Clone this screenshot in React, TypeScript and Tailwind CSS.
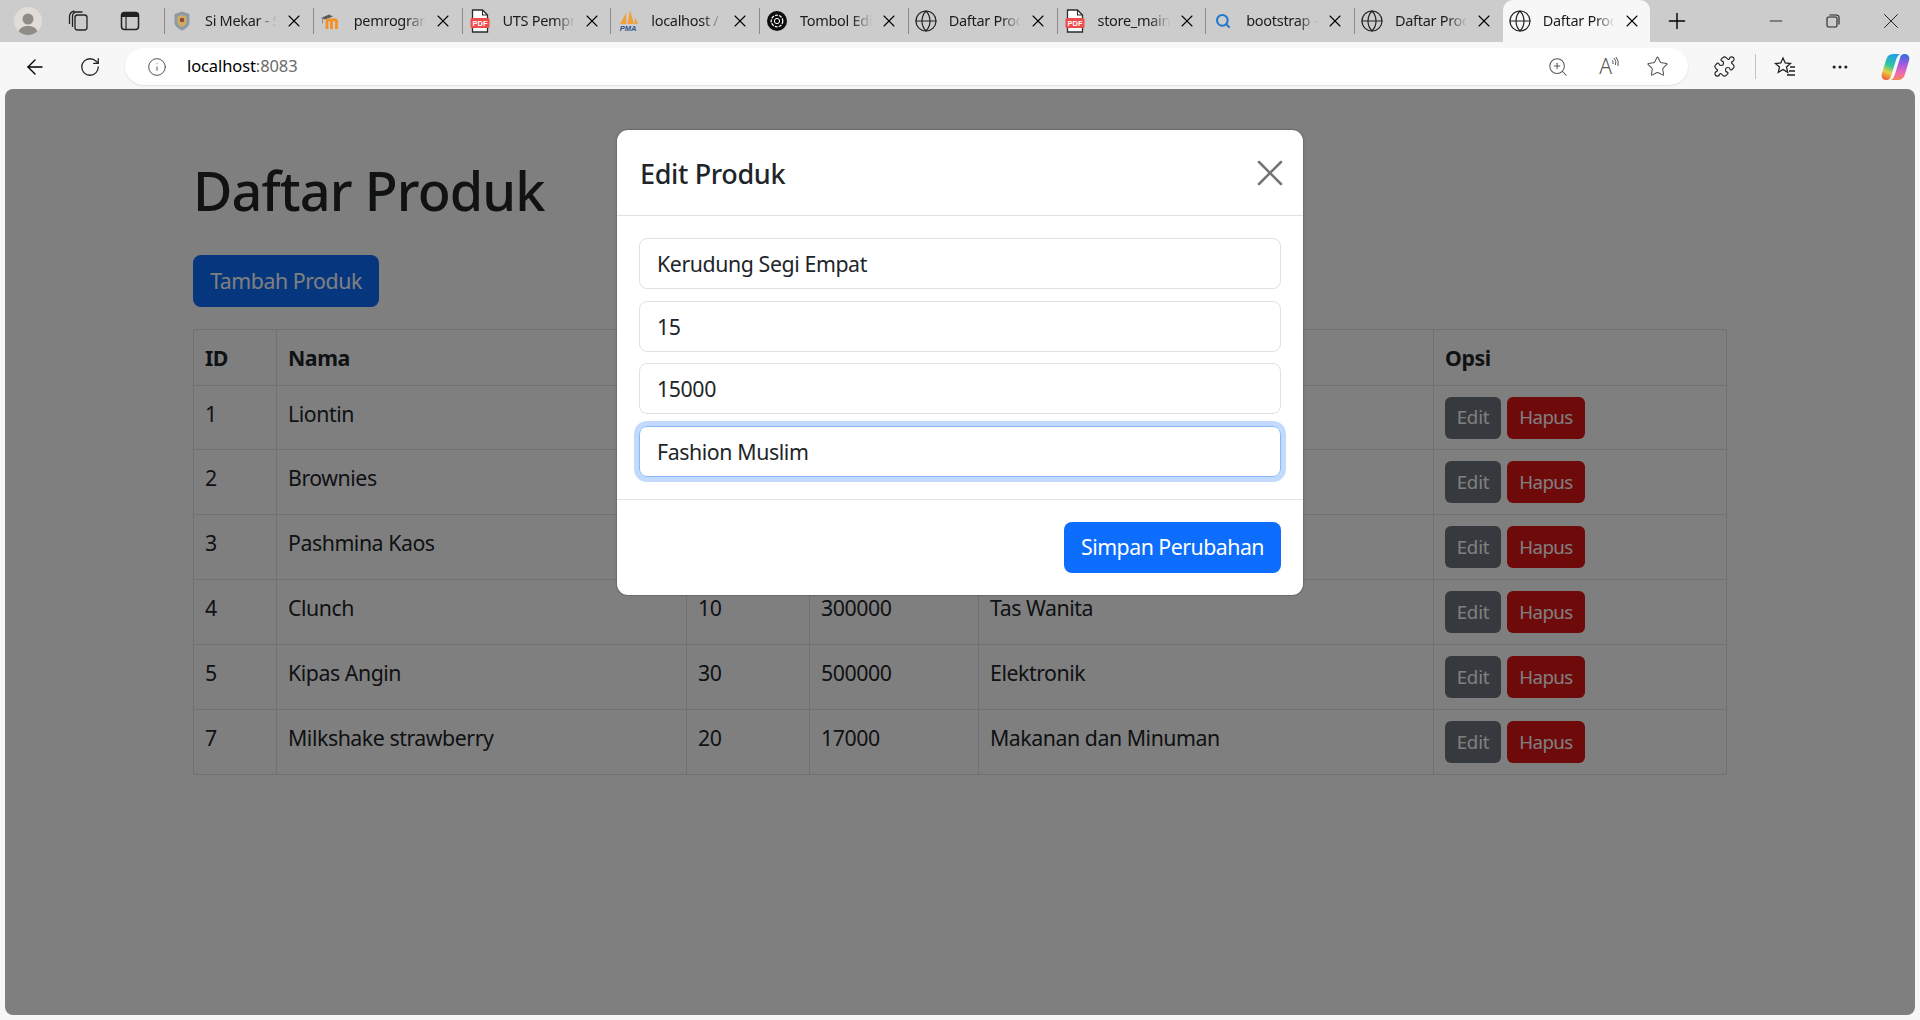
import { X, ArrowLeft, RotateCw, Info, ZoomIn, Star, Puzzle, MoreHorizontal, Plus, Minus, Search, Globe } from "lucide-react";

interface ITab {
  title: string;
  icon: string;
}

const tabs: ITab[] = [
  { title: "Si Mekar - Sistem", icon: "shield" },
  { title: "pemrograman web", icon: "moodle" },
  { title: "UTS Pemprograman", icon: "pdf" },
  { title: "localhost / phpMyAdmin", icon: "pma" },
  { title: "Tombol Edit", icon: "openai" },
  { title: "Daftar Produk", icon: "globe" },
  { title: "store_main", icon: "pdf" },
  { title: "bootstrap - Search", icon: "search" },
  { title: "Daftar Produk", icon: "globe" },
];

interface IProduk {
  id: number;
  nama: string;
  stok: number;
  harga: number;
  kategori: string;
}

const produk: IProduk[] = [
  { id: 1, nama: "Liontin", stok: 5, harga: 250000, kategori: "Aksesoris" },
  { id: 2, nama: "Brownies", stok: 25, harga: 45000, kategori: "Makanan dan Minuman" },
  { id: 3, nama: "Pashmina Kaos", stok: 40, harga: 35000, kategori: "Fashion Muslim" },
  { id: 4, nama: "Clunch", stok: 10, harga: 300000, kategori: "Tas Wanita" },
  { id: 5, nama: "Kipas Angin", stok: 30, harga: 500000, kategori: "Elektronik" },
  { id: 7, nama: "Milkshake strawberry", stok: 20, harga: 17000, kategori: "Makanan dan Minuman" },
];

function Favicon({ icon }: { icon: string }) {
  if (icon === "shield") {
    return (
      <svg width="16" height="20" viewBox="0 0 16 20" className="shrink-0">
        <path d="M8 .5l7.500 2.500v8c0 4-3.500 6.500-7.500 8.500C4 17.500.5 15 .5 11V3z" fill="#8d9aa6" />
        <path d="M8 4l4.500 1.500V11c0 2.500-2 4-4.500 5-2.500-1-4.500-2.500-4.500-5V5.500z" fill="#d0ac62" />
        <circle cx="8" cy="9" r="2.300" fill="#8a4b3e" />
      </svg>
    );
  }
  if (icon === "moodle") {
    return (
      <svg width="20" height="18" viewBox="0 0 20 18" className="shrink-0">
        <path d="M0 6l8-3.500 4 2-8 3z" fill="#5a5a5a" />
        <path d="M1.500 6.500v5" stroke="#8a8a8a" strokeWidth="1" />
        <path d="M6 17V9.500c0-2.500 4.500-2.500 4.500 0V17M10.500 9.500c0-2.500 5-2.500 5 0V17" fill="none" stroke="#f39220" strokeWidth="2.800" />
      </svg>
    );
  }
  if (icon === "pdf") {
    return (
      <svg width="20" height="24" viewBox="0 0 20 24" className="shrink-0">
        <path d="M2.500 1h10l5 5v17h-15z" fill="#fff" stroke="#2b2b2b" strokeWidth="1.300" />
        <path d="M12.500 1v5h5" fill="none" stroke="#2b2b2b" strokeWidth="1.100" />
        <rect x="0.500" y="9" width="19" height="10" rx="1.500" fill="#f04b4b" />
        <text x="10" y="16.800" textAnchor="middle" fontSize="7.500" fontWeight="700" fill="#fff" fontFamily="Liberation Sans, sans-serif">PDF</text>
      </svg>
    );
  }
  if (icon === "pma") {
    return (
      <svg width="22" height="22" viewBox="0 0 22 22" className="shrink-0">
        <path d="M3 14L9 3l.5 11zM10.500 14L13 0l4 14zM17.500 14l.5-7 3 7z" fill="#f0a238" />
        <text x="11" y="21" textAnchor="middle" fontSize="7.500" fontWeight="700" fontStyle="italic" fill="#33558f" fontFamily="Liberation Sans, sans-serif">PMA</text>
      </svg>
    );
  }
  if (icon === "openai") {
    return (
      <svg width="20" height="20" viewBox="0 0 20 20" className="shrink-0">
        <circle cx="10" cy="10" r="10" fill="#0d0d0d" />
        <circle cx="10" cy="10" r="5.800" fill="none" stroke="#fff" strokeWidth="1.200" strokeDasharray="3 1.100" />
        <circle cx="10" cy="10" r="2.600" fill="none" stroke="#fff" strokeWidth="1" />
      </svg>
    );
  }
  if (icon === "search") {
    return <Search size={16} strokeWidth={3} className="shrink-0 text-[#1f78c8]" />;
  }
  return <Globe size={24} strokeWidth={1.2} className="shrink-0 text-[#222]" />;
}

function BrowserTab({ tab, active }: { tab: ITab; active?: boolean }) {
  return (
    <div className={"relative flex h-[42px] items-center pl-[7px] " + (active ? "w-[147px] rounded-t-[10px] bg-[#f7f7f7]" : "w-[147.75px]")}>
      <span className="flex w-[20px] shrink-0 items-center justify-center"><Favicon icon={tab.icon} /></span>
      <span className="ml-[13px] w-[72px] overflow-hidden whitespace-nowrap text-[14.5px] tracking-[-0.3px] text-[#1c1c1c] [mask-image:linear-gradient(to_right,black_72%,transparent)]">{tab.title}</span>
      <X size={20} strokeWidth={1.3} className="absolute left-[119px] text-black" />
    </div>
  );
}

function BrowserChrome() {
  return (
    <>
      <div className="flex h-[42px] items-center bg-[#cccccc]">
        <div className="flex w-[164px] items-center">
          <div className="ml-[14px] flex h-[28px] w-[28px] items-end justify-center overflow-hidden rounded-full bg-[#e0ddd8]">
            <svg width="24" height="24" viewBox="0 0 24 24">
              <circle cx="12" cy="8" r="5.500" fill="#8f8c87" />
              <path d="M2 24c0-7 5-9 10-9s10 2 10 9z" fill="#8f8c87" />
            </svg>
          </div>
          <svg width="24" height="24" viewBox="0 0 24 24" fill="none" stroke="#222" strokeWidth="1.300" className="ml-[24px]">
            <rect x="9" y="6" width="12" height="15" rx="2.500" />
            <path d="M6.500 18V7a4 4 0 0 1 4-4h6M3.500 15V7a6 6 0 0 1 5-5" />
          </svg>
          <svg width="22" height="22" viewBox="0 0 22 22" className="ml-[29px]">
            <rect x="2.500" y="2.500" width="17" height="17" rx="3" fill="none" stroke="#222" strokeWidth="1.500" />
            <path d="M2.500 5.500a3 3 0 0 1 3-3h11a3 3 0 0 1 3 3V7h-17z" fill="#222" />
            <path d="M7 7v12.500" stroke="#222" strokeWidth="1.200" />
          </svg>
        </div>
        {tabs.map((t, i) => (
          <div key={i} className="flex items-center">
            <div className="h-[26px] w-px bg-[#8b8b8b]" />
            <BrowserTab tab={t} />
          </div>
        ))}
        <BrowserTab tab={{ title: "Daftar Produk", icon: "globe" }} active />
        <Plus size={26} strokeWidth={1.300} className="ml-[14px] text-black" />
        <div className="ml-auto flex items-center">
          <Minus size={20} strokeWidth={1.100} className="mr-[40px] text-[#222]" />
          <svg width="14" height="14" viewBox="0 0 14 14" fill="none" stroke="#222" strokeWidth="1.100" className="mr-[38px]">
            <rect x="1" y="3" width="10" height="10" rx="1.500" />
            <path d="M3.500 1h7a2.500 2.500 0 0 1 2.500 2.500v7" />
          </svg>
          <X size={26} strokeWidth={0.900} className="mr-[16px] text-[#222]" />
        </div>
      </div>

      <div className="flex h-[47px] items-center bg-[#f7f7f7] pt-[2px]">
        <ArrowLeft size={24} strokeWidth={1.400} className="ml-[23px] text-black" />
        <RotateCw size={22} strokeWidth={1.400} className="ml-[32px] text-[#222]" />
        <div className="ml-[24px] flex h-[37px] w-[1563px] items-center rounded-full bg-white pl-[22px] shadow-[0_1px_2px_rgba(0,0,0,0.1)]">
          <Info size={20} strokeWidth={1.100} className="text-[#444]" />
          <span className="ml-[20px] text-[16.5px] tracking-[-0.1px] text-black">localhost<span className="text-[#6b6b6b]">:8083</span></span>
          <div className="ml-auto flex items-center pr-[19px] text-[#555]">
            <ZoomIn size={22} strokeWidth={1.100} />
            <span className="ml-[30px] flex items-start text-[21px] font-light leading-none">
              A
              <svg width="9" height="12" viewBox="0 0 9 12" fill="none" stroke="#555" strokeWidth="1">
                <path d="M1 8a4 4 0 0 0-1-4M3.500 9a7 7 0 0 0-1.500-7M6 10a10 10 0 0 0-2-9" />
              </svg>
            </span>
            <Star size={23} strokeWidth={1.100} className="ml-[25px]" />
          </div>
        </div>
        <Puzzle size={23} strokeWidth={1.200} className="ml-[25px] text-[#222]" />
        <div className="ml-[19px] h-[25px] w-px bg-[#c4c4c4]" />
        <svg width="24" height="24" viewBox="0 0 24 24" fill="none" stroke="#222" strokeWidth="1.300" className="ml-[17px]">
          <path d="M10 3l2.200 5 5.300.5-4 3.600 1.200 5.200-4.700-2.800-4.700 2.800 1.200-5.200-4-3.600 5.300-.5z" />
          <path d="M17 12h5M16 16h6M14 20h8" />
        </svg>
        <MoreHorizontal size={20} strokeWidth={1.800} className="ml-[33px] text-[#222]" />
        <svg width="29" height="28" viewBox="0 0 29 28" className="ml-[31px]">
          <defs>
            <linearGradient id="cpa" x1="0.600" y1="0" x2="0.300" y2="1">
              <stop offset="0" stopColor="#1f9fe8" />
              <stop offset="0.45" stopColor="#35c6a0" />
              <stop offset="0.72" stopColor="#e8d040" />
              <stop offset="1" stopColor="#f0603a" />
            </linearGradient>
            <linearGradient id="cpb" x1="0.500" y1="0" x2="0.500" y2="1">
              <stop offset="0" stopColor="#2f6fdc" />
              <stop offset="0.4" stopColor="#a45ae0" />
              <stop offset="0.75" stopColor="#f06ab0" />
              <stop offset="1" stopColor="#f08a50" />
            </linearGradient>
          </defs>
          <path d="M12 1h7c-2 1-3 3-4 6l-2.500 8-2.500 8c-.7 3-2.500 4-4 4H5c-3 0-5-3-4.200-6L5 7c1-4 3.500-6 7-6z" fill="url(#cpa)" />
          <path d="M17 27h-7c2-1 3-3 4-6l2.500-8L19 5c.7-3 2.500-4 4-4h1c3 0 5 3 4.200 6L24 21c-1 4-3.500 6-7 6z" fill="url(#cpb)" />
        </svg>
      </div>
    </>
  );
}

function EditModal() {
  const fields = ["Kerudung Segi Empat", "15", "15000"];
  return (
    <div className="absolute left-[612px] top-[41px] w-[686px] rounded-[11px] bg-white shadow-[0_0_2px_rgba(0,0,0,0.5)]">
      <div className="flex h-[86px] items-center justify-between border-b border-[#dee2e6] pl-[23px] pr-[11px]">
        <h5 className="pt-[4px] text-[27px] font-medium tracking-[-0.35px] text-[#212529]">Edit Produk</h5>
        <X size={44} strokeWidth={1.400} className="text-[#757575]" />
      </div>
      <div className="flex flex-col gap-[11.5px] border-b border-[#dee2e6] p-[22px]">
        {fields.map((f) => (
          <input key={f} readOnly value={f} className="h-[51px] w-full rounded-[8px] border border-[#dee2e6] px-[17px] text-[21.3px] tracking-[-0.4px] text-[#212529] outline-none" />
        ))}
        <input readOnly value="Fashion Muslim" className="h-[51px] w-full rounded-[8px] border border-[#86b7fe] px-[17px] text-[21.3px] tracking-[-0.4px] text-[#212529] shadow-[0_0_0_5px_#c3dafe] outline-none" />
      </div>
      <div className="flex justify-end p-[22px]">
        <button className="h-[51px] w-[217px] rounded-[8px] bg-[#0d6efd] text-[21.3px] tracking-[-0.5px] text-white">Simpan Perubahan</button>
      </div>
    </div>
  );
}

export default function App() {
  return (
    <div className="flex h-[1020px] flex-col overflow-hidden bg-[#f7f7f7] [font-family:'Noto_Sans',sans-serif]">
      <BrowserChrome />
      <div className="relative mx-[5px] h-[926px] overflow-hidden rounded-lg bg-white">
        <div className="px-[188px] pt-[69px]">
          <h1 className="text-[54px] font-medium leading-[64px] tracking-[-0.9px] text-[#212529]">Daftar Produk</h1>
          <button className="mt-[33px] block h-[52px] w-[186px] rounded-[8px] bg-[#0d6efd] text-[21.3px] tracking-[-0.45px] text-white">Tambah Produk</button>
          <table className="mt-[22px] w-[1534px] table-fixed border-collapse text-[21.3px] tracking-[-0.45px] text-[#212529]">
            <thead>
              <tr className="h-[56px] font-bold">
                <th className="w-[83px] border border-[#dee2e6] px-[11px] text-left">ID</th>
                <th className="w-[410px] border border-[#dee2e6] px-[11px] text-left">Nama</th>
                <th className="w-[123px] border border-[#dee2e6] px-[11px] text-left">Stok</th>
                <th className="w-[169px] border border-[#dee2e6] px-[11px] text-left">Harga</th>
                <th className="w-[455px] border border-[#dee2e6] px-[11px] text-left">Kategori</th>
                <th className="border border-[#dee2e6] px-[11px] text-left">Opsi</th>
              </tr>
            </thead>
            <tbody>
              {produk.map((p, i) => (
                <tr key={p.id} className={i === 0 ? "h-[64px]" : "h-[65px]"}>
                  <td className="border border-[#dee2e6] px-[11px] pb-[8px] align-middle">{p.id}</td>
                  <td className="border border-[#dee2e6] px-[11px] pb-[8px] align-middle">{p.nama}</td>
                  <td className="border border-[#dee2e6] px-[11px] pb-[8px] align-middle">{p.stok}</td>
                  <td className="border border-[#dee2e6] px-[11px] pb-[8px] align-middle">{p.harga}</td>
                  <td className="border border-[#dee2e6] px-[11px] pb-[8px] align-middle">{p.kategori}</td>
                  <td className="border border-[#dee2e6] px-[11px] align-middle">
                    <div className="flex gap-[6px]">
                      <button className="h-[42px] w-[56px] rounded-[6px] bg-[#6c757d] text-[18.7px] tracking-[-0.2px] text-white">Edit</button>
                      <button className="h-[42px] w-[78px] rounded-[6px] bg-[#de1416] text-[18.7px] tracking-[-0.6px] text-white">Hapus</button>
                    </div>
                  </td>
                </tr>
              ))}
            </tbody>
          </table>
        </div>
        <div className="absolute inset-0 bg-black/50" />
        <EditModal />
      </div>
    </div>
  );
}
